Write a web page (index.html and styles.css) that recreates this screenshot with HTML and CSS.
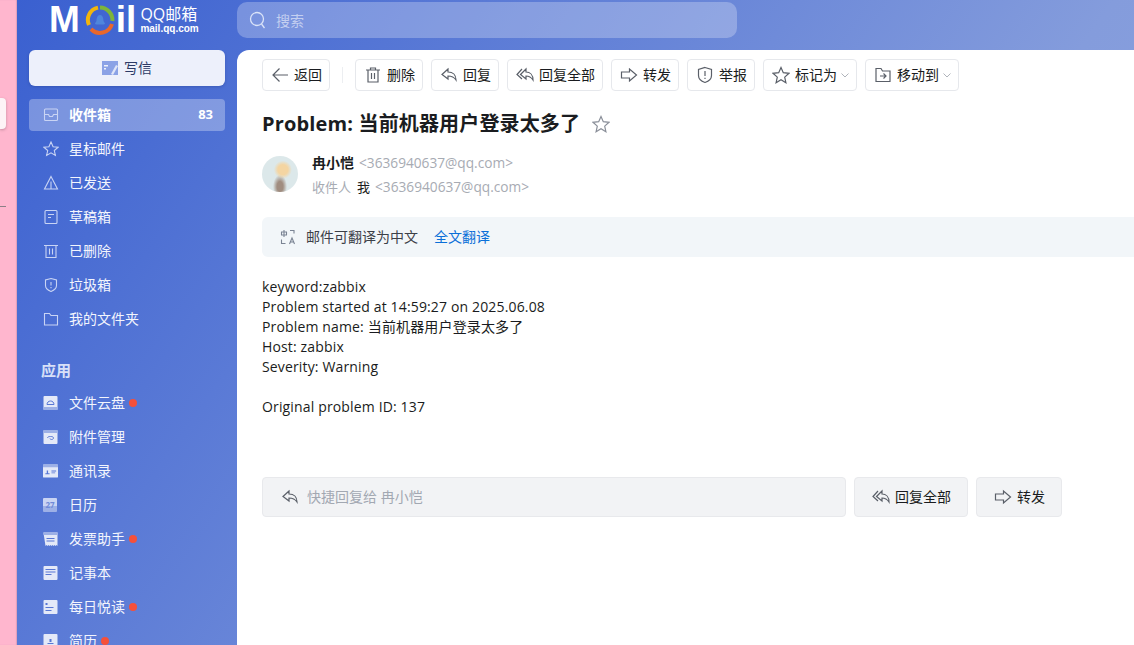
FILE: index.html
```html
<!DOCTYPE html>
<html lang="en">
<head>
    <meta charset="UTF-8">
    <meta name="viewport" content="width=device-width, initial-scale=1.0">
    <title>QQ邮箱</title>

    <link rel="stylesheet" href="styles.css">
</head>
<body>

    <div class="edge">
        <div class="edge-tab"></div>
        <div class="edge-line"></div>
    </div>

    <div class="app">
        <header class="topbar">
            <div class="logo">
                <span class="logo-word">M</span>
                <svg class="logo-ring" width="30" height="30" viewBox="0 0 30 30" fill="none" stroke-width="4">
                    <path d="M4 20A12.500 12.500 0 0 1 13 2.600" stroke="#f2b50c"/>
                    <path d="M15 2.500A12.500 12.500 0 0 1 27.400 16" stroke="#7db53a"/>
                    <path d="M27 19A12.500 12.500 0 0 1 6 24" stroke="#e9672a"/>
                    <path d="M10 19c0-1 1-2 1.500-3 0-3 1-6 3.500-6s3.500 3 3.500 6c.5 1 1.500 2 1.500 3-1 .5-2 .5-3 .5h-4c-1 0-2 0-3-.5z" fill="#4f86dc" stroke="none"/>
                </svg>
                <span class="logo-word">il</span>
                <div class="logo-text">
                    <span class="logo-name">QQ邮箱</span>
                    <span class="logo-url">mail.qq.com</span>
                </div>
            </div>
            <div class="search">
                <svg width="20" height="20" viewBox="0 0 20 20" fill="none" stroke="#dbe4f8" stroke-width="1.300">
                    <circle cx="9" cy="9" r="6.500"/>
                    <path d="M13.500 14l3 4"/>
                </svg>
                <span>搜索</span>
            </div>
        </header>

        <div class="workspace">
            <nav class="sidebar">
                <button class="compose">
                    <svg width="16" height="14" viewBox="0 0 16 14">
                        <rect width="16" height="14" fill="#8ba2e6"/>
                        <path d="M2 4h4v1.500H2zM2 7h2v1.500H2z" fill="#eef1fb"/>
                        <path d="M9 13l5-9 2 1-5 9z" fill="#dfe5f8"/>
                    </svg>
                    写信
                </button>

                <ul class="menu">
                    <li class="menu-item active">
                        <svg class="icon" viewBox="0 0 16 16"><rect x="1.500" y="2" width="13" height="11.500" rx="1"/><path d="M1.500 7.500h4l1 2h3l1-2h4"/></svg>
                        收件箱<span class="count">83</span>
                    </li>
                    <li class="menu-item">
                        <svg class="icon" viewBox="0 0 16 16"><path d="M8 1l2.100 4.700 5 .5-3.800 3.300 1.100 5L8 11.900 3.600 14.500l1.100-5L.9 6.200l5-.5z"/></svg>
                        星标邮件
                    </li>
                    <li class="menu-item">
                        <svg class="icon" viewBox="0 0 16 16"><path d="M8 1.500l6.500 12.500h-13zM8 6.500V14"/></svg>
                        已发送
                    </li>
                    <li class="menu-item">
                        <svg class="icon" viewBox="0 0 16 16"><rect x="2" y="1.500" width="12" height="13" rx="1"/><path d="M5 5.500h6M5 8.500h3"/></svg>
                        草稿箱
                    </li>
                    <li class="menu-item">
                        <svg class="icon" viewBox="0 0 16 16"><path d="M1 2.500h14M3 2.500V14.500h10V2.500M6.500 5.500v6M9.500 5.500v6"/></svg>
                        已删除
                    </li>
                    <li class="menu-item">
                        <svg class="icon" viewBox="0 0 16 16"><path d="M8 1.500l5.500 1.500v5.500c0 3-3 5-5.500 6-2.500-1-5.500-3-5.500-6V3zM8 5v3.500M8 10v1.200"/></svg>
                        垃圾箱
                    </li>
                    <li class="menu-item">
                        <svg class="icon" viewBox="0 0 16 16"><path d="M1.500 2.500h5l1.500 2h6.500v9.500h-13z"/></svg>
                        我的文件夹
                    </li>
                </ul>

                <h3 class="menu-title">应用</h3>

                <ul class="menu">
                    <li class="menu-item">
                        <svg class="tile" viewBox="0 0 14 14"><rect width="14" height="14" rx="1" fill="#e4e9f8"/><rect y="11" width="14" height="3" fill="#9db0e6"/><path d="M3.500 8.500c0-2 1.500-3.500 3.500-3.500s3.500 1.500 3.500 3.500z" fill="none" stroke="#5877d4"/></svg>
                        文件云盘<span class="dot"></span>
                    </li>
                    <li class="menu-item">
                        <svg class="tile" viewBox="0 0 14 14"><rect width="14" height="14" rx="1" fill="#e4e9f8"/><rect width="14" height="3" fill="#9db0e6"/><path d="M4 8c0-1 1-1.500 3-1.500s3 .5 3 1.500-1 1.500-2 1.500-1.500-.5-1.500-1" fill="none" stroke="#5877d4"/></svg>
                        附件管理
                    </li>
                    <li class="menu-item">
                        <svg class="tile" viewBox="0 0 16 14"><rect width="16" height="14" rx="1" fill="#e4e9f8"/><rect width="16" height="3" fill="#9db0e6"/><path d="M2.500 10.500h4.500v-1H5.400V6.500H4v3H2.500zM9 6.500h5v1H9zM9 8.500h4v1H9z" fill="#5877d4"/></svg>
                        通讯录
                    </li>
                    <li class="menu-item">
                        <span class="tile-date">27</span>
                        日历
                    </li>
                    <li class="menu-item">
                        <svg class="tile" viewBox="0 0 14 14"><path d="M0 1a1 1 0 0 1 1-1h12a1 1 0 0 1 1 1v13l-1-1-1 1-1-1-1 1-1-1-1 1-1-1-1 1-1-1-1 1-1-1-1 1z" fill="#e4e9f8"/><path d="M0 1a1 1 0 0 1 1-1h12a1 1 0 0 1 1 1v2H0z" fill="#9db0e6"/><path d="M3 6h8v1H3zM3 8.500h8v1H3z" fill="#5877d4"/></svg>
                        发票助手<span class="dot"></span>
                    </li>
                    <li class="menu-item">
                        <svg class="tile" viewBox="0 0 14 14"><rect width="14" height="14" rx="1" fill="#e4e9f8"/><path d="M2 3h10v1H2zM2 5.500h10v1H2zM2 8h6v1H2z" fill="#5877d4"/></svg>
                        记事本
                    </li>
                    <li class="menu-item">
                        <svg class="tile" viewBox="0 0 14 14"><rect width="14" height="14" rx="1" fill="#e4e9f8"/><path d="M2 3h2v2H2zM2 7h8v1H2zM2 10h6v1H2z" fill="#5877d4"/></svg>
                        每日悦读<span class="dot"></span>
                    </li>
                    <li class="menu-item">
                        <svg class="tile" viewBox="0 0 14 14"><rect width="14" height="14" rx="1" fill="#e4e9f8"/><path d="M6 5h2v3H6zM4 9h6v1H4z" fill="#5877d4"/></svg>
                        简历<span class="dot"></span>
                    </li>
                </ul>
            </nav>

            <main class="panel">
                <div class="toolbar">
                    <button class="tool">
                        <svg class="tool-icon" viewBox="0 0 18 18"><path d="M17 9H2M8.500 2.500L2 9l6.500 6.500"/></svg>返回
                    </button>
                    <span class="tool-sep"></span>
                    <button class="tool">
                        <svg class="tool-icon" viewBox="0 0 18 18"><path d="M2 4h14M6.500 4V2h5v2M4 4v12h10V4M7.500 7v6M10.500 7v6"/></svg>删除
                    </button>
                    <button class="tool">
                        <svg class="tool-icon" viewBox="0 0 18 18"><path d="M8 3L2 8.500 8 13v-3c4 0 6 1 8 4 0-5-3-8-8-8z"/></svg>回复
                    </button>
                    <button class="tool">
                        <svg class="tool-icon" viewBox="0 0 18 18"><path d="M6 3L1 8.500 6 13M10 3L4.500 8.500 10 13v-3c3 0 5 1 7 4 0-5-3-8-7-8z"/></svg>回复全部
                    </button>
                    <button class="tool">
                        <svg class="tool-icon" viewBox="0 0 18 18"><path d="M1.500 6h8V3l7 6-7 6v-3h-8z"/></svg>转发
                    </button>
                    <button class="tool">
                        <svg class="tool-icon" viewBox="0 0 18 18"><path d="M9 1.500l6.500 2v6c0 3.500-3.500 6-6.500 7-3-1-6.500-3.500-6.500-7v-6zM9 5v5M9 11.700v1.300"/></svg>举报
                    </button>
                    <button class="tool">
                        <svg class="tool-icon" viewBox="0 0 18 18"><path d="M9 1.500l2.300 5.200 5.700.6-4.300 3.800 1.200 5.600L9 13.800l-4.900 2.900 1.200-5.600L1 7.300l5.700-.6z"/></svg>标记为
                        <svg class="caret" viewBox="0 0 8 5"><path d="M.5.500L4 4 7.500.500"/></svg>
                    </button>
                    <button class="tool">
                        <svg class="tool-icon" viewBox="0 0 18 18"><path d="M2 2.500h5l1.500 2.500H16v10.500H2zM6 10h6M9.500 7.500L12 10l-2.500 2.500"/></svg>移动到
                        <svg class="caret" viewBox="0 0 8 5"><path d="M.5.500L4 4 7.500.500"/></svg>
                    </button>
                </div>

                <div class="subject">
                    <h1>Problem: 当前机器用户登录太多了</h1>
                    <svg width="18" height="18" viewBox="0 0 18 18" fill="none" stroke="#8a8f99" stroke-width="1.200"><path d="M9 1.500l2.300 5.200 5.700.6-4.300 3.800 1.200 5.600L9 13.800l-4.900 2.900 1.200-5.600L1 7.300l5.700-.6z"/></svg>
                </div>

                <div class="sender">
                    <div class="avatar"></div>
                    <div class="sender-lines">
                        <div class="sender-line"><b>冉小恺</b><span class="addr">&lt;3636940637@qq.com&gt;</span></div>
                        <div class="sender-line"><span class="muted">收件人</span><span class="me">我</span><span class="addr">&lt;3636940637@qq.com&gt;</span></div>
                    </div>
                </div>

                <div class="translate">
                    <svg width="16" height="16" viewBox="0 0 16 16" fill="none" stroke="#7b8494" stroke-width="1.100">
                        <path d="M1.500 3h5v3h-5zM4 1v7M10 1.500h4v3M1.500 10.500v4h4"/>
                        <path d="M9.500 15l2.500-6 2.500 6M10.500 13h3"/>
                    </svg>
                    <span class="translate-text">邮件可翻译为中文</span>
                    <a class="translate-link">全文翻译</a>
                </div>

                <div class="mail-body">
                    <p>keyword:zabbix</p>
                    <p>Problem started at 14:59:27 on 2025.06.08</p>
                    <p>Problem name: 当前机器用户登录太多了</p>
                    <p>Host: zabbix</p>
                    <p>Severity: Warning</p>
                    <br>
                    <p>Original problem ID: 137</p>
                </div>

                <div class="quick">
                    <div class="quick-input">
                        <svg class="tool-icon" viewBox="0 0 18 18"><path d="M8 3L2 8.500 8 13v-3c4 0 6 1 8 4 0-5-3-8-8-8z"/></svg>
                        <span>快捷回复给 冉小恺</span>
                    </div>
                    <button class="quick-btn">
                        <svg class="tool-icon" viewBox="0 0 18 18"><path d="M6 3L1 8.500 6 13M10 3L4.500 8.500 10 13v-3c3 0 5 1 7 4 0-5-3-8-7-8z"/></svg>回复全部
                    </button>
                    <button class="quick-btn">
                        <svg class="tool-icon" viewBox="0 0 18 18"><path d="M1.500 6h8V3l7 6-7 6v-3h-8z"/></svg>转发
                    </button>
                </div>
            </main>
        </div>
    </div>

</body>
</html>
```

FILE: styles.css
```css
* {
    margin: 0;
    padding: 0;
    box-sizing: border-box;
}

html, body {
    height: 100%;
    overflow: hidden;
}

body {
    display: flex;
    font-size: 14px;
    font-family: "Open Sans", "Noto Sans CJK SC", sans-serif;
    color: #1a1c20;
}

button {
    font: inherit;
    color: inherit;
    background: none;
    border: none;
}

ul {
    list-style: none;
}

/* pink strip of the window behind */
.edge {
    width: 17px;
    flex: none;
    background: #ffb6ce;
    box-shadow: inset -1px 0 1px rgba(120, 90, 120, 0.25);
    padding-top: 98px;
}

.edge-tab {
    width: 6px;
    height: 31px;
    background: #fdf3f6;
    border-radius: 0 4px 4px 0;
    box-shadow: 0 1px 3px rgba(0, 0, 0, 0.25);
}

.edge-line {
    width: 6px;
    height: 1px;
    background: #8c7f86;
    margin-top: 77px;
}

.app {
    flex: 1;
    min-width: 0;
    display: flex;
    flex-direction: column;
    background: linear-gradient(125deg, #3a60d0 0%, #5a7ad6 30%, #849cdc 70%, #8fa4df 100%);
}

.topbar {
    height: 50px;
    flex: none;
    display: flex;
}

.logo {
    width: 220px;
    flex: none;
    display: flex;
    align-items: center;
    padding: 0 0 10px 32px;
    color: #fff;
}

.logo-word {
    font-family: "Liberation Sans", sans-serif;
    font-weight: 700;
    font-size: 37px;
    line-height: 40px;
}

.logo-ring {
    margin: 0 1px 0 5px;
}

.logo-text {
    display: flex;
    flex-direction: column;
    margin-left: 4px;
    line-height: 1;
}

.logo-name {
    font-size: 16px;
}

.logo-url {
    font-size: 10px;
    font-weight: 700;
    margin-top: 2px;
    font-family: "Liberation Sans", sans-serif;
}

.search {
    width: 500px;
    height: 36px;
    margin-top: 2px;
    display: flex;
    align-items: center;
    gap: 8px;
    padding-left: 11px;
    padding-bottom: 1px;
    border-radius: 10px;
    background: rgba(255, 255, 255, 0.26);
    color: #c4cff0;
    font-size: 14px;
}

.workspace {
    flex: 1;
    min-height: 0;
    display: flex;
}

.sidebar {
    width: 220px;
    flex: none;
    padding: 0 12px;
    overflow: hidden;
}

.compose {
    width: 196px;
    height: 36px;
    display: flex;
    align-items: center;
    justify-content: center;
    gap: 6px;
    padding-bottom: 3px;
    font-size: 14px;
    background: #edf0fb;
    color: #2c3a66;
    border-radius: 6px;
    margin-bottom: 13px;
    box-shadow: 0 1px 3px rgba(30, 50, 120, 0.3);
}

.compose svg {
    margin-top: 3px;
}

.menu-item {
    height: 32px;
    margin-bottom: 2px;
    display: flex;
    align-items: center;
    padding-left: 14px;
    padding-bottom: 2px;
    font-size: 14px;
    color: #f3f5fd;
    border-radius: 4px;
}

.menu-item.active {
    background: rgba(255, 255, 255, 0.3);
    font-weight: 700;
    color: #fff;
}

.icon {
    width: 16px;
    height: 16px;
    margin: 2px 10px 0 0;
    flex: none;
    fill: none;
    stroke: #c9d4f4;
    stroke-width: 1.100;
}

.tile {
    width: 15px;
    height: 14px;
    margin: 2px 11px 0 0;
    flex: none;
}

.tile-date {
    width: 14px;
    height: 14px;
    margin: 2px 12px 0 0;
    flex: none;
    font-size: 8px;
    line-height: 14px;
    text-align: center;
    font-weight: 700;
    color: #6f8ad8;
    border-radius: 1px;
    background: linear-gradient(#c9d4f3 60%, #9db0e6 60%);
}

.count {
    margin-left: auto;
    margin-right: 12px;
    font-size: 13px;
}

.dot {
    width: 8px;
    height: 8px;
    margin: 2px 0 0 4px;
    border-radius: 50%;
    background: #f5503a;
}

.menu-title {
    font-size: 15px;
    font-weight: 700;
    color: #d8e0f8;
    height: 20px;
    line-height: 20px;
    margin: 25px 0 7px 12px;
}

.panel {
    flex: 1;
    min-width: 0;
    background: #fff;
    border-top-left-radius: 12px;
    padding: 9px 0 0 25px;
    overflow: hidden;
}

.toolbar {
    display: flex;
    align-items: center;
    gap: 8px;
}

.tool {
    height: 32px;
    display: flex;
    align-items: center;
    gap: 5px;
    padding: 0 7px 2px 8px;
    font-size: 14px;
    border: 1px solid #e6e8ec;
    border-radius: 4px;
    background: #fff;
    white-space: nowrap;
}

.tool-icon {
    width: 18px;
    height: 18px;
    margin-top: 2px;
    flex: none;
    fill: none;
    stroke: #5a5f68;
    stroke-width: 1.200;
}

.caret {
    width: 8px;
    height: 5px;
    margin: 2px 0 0 -1px;
    fill: none;
    stroke: #b0b4bb;
}

.tool-sep {
    width: 1px;
    height: 16px;
    background: #eceef1;
    margin: 0 4px;
}

.subject {
    display: flex;
    align-items: center;
    gap: 12px;
    margin-top: 18px;
    height: 30px;
}

.subject h1 {
    font-size: 20px;
    font-weight: 700;
    line-height: 30px;
    letter-spacing: 0.15px;
}

.sender {
    display: flex;
    gap: 14px;
    margin-top: 11px;
}

.avatar {
    width: 36px;
    height: 36px;
    flex: none;
    margin-top: 6px;
    border-radius: 50%;
    background:
        radial-gradient(circle at 58% 38%, #f4d5a2 0 5px, transparent 9px),
        radial-gradient(ellipse at 50% 85%, #a08d80 0 3px, transparent 7px),
        #dce8ea;
}

.sender-line {
    display: flex;
    align-items: center;
    height: 24px;
    font-size: 14px;
}

.sender-line b {
    font-weight: 700;
    margin-right: 5px;
}

.addr {
    font-size: 13.700px;
    color: #a7abb3;
}

.muted {
    font-size: 13px;
    color: #a7abb3;
}

.me {
    margin: 0 5px 0 6px;
    font-size: 13px;
}

.translate {
    height: 40px;
    margin-top: 19px;
    display: flex;
    align-items: center;
    padding: 0 0 2px 18px;
    background: #f2f6f9;
    border-radius: 6px 0 0 6px;
    font-size: 14px;
}

.translate svg {
    margin-top: 2px;
}

.translate-text {
    margin-left: 10px;
    color: #3c4048;
}

.translate-link {
    margin-left: 16px;
    color: #0a6fd8;
}

.mail-body {
    margin-top: 20px;
    font-size: 14px;
    line-height: 20px;
    letter-spacing: 0.150px;
}

.quick {
    display: flex;
    gap: 8px;
    margin-top: 60px;
    padding-right: 72px;
}

.quick-input {
    width: 584px;
    height: 40px;
    display: flex;
    align-items: center;
    gap: 8px;
    padding: 0 0 2px 18px;
    font-size: 14px;
    color: #a2a8b2;
    background: #f2f3f5;
    border: 1px solid #e8e9ec;
    border-radius: 4px;
}

.quick-btn {
    height: 40px;
    display: flex;
    align-items: center;
    gap: 5px;
    padding: 0 16px 2px 17px;
    font-size: 14px;
    background: #f2f3f5;
    border: 1px solid #e8e9ec;
    border-radius: 4px;
}
```
